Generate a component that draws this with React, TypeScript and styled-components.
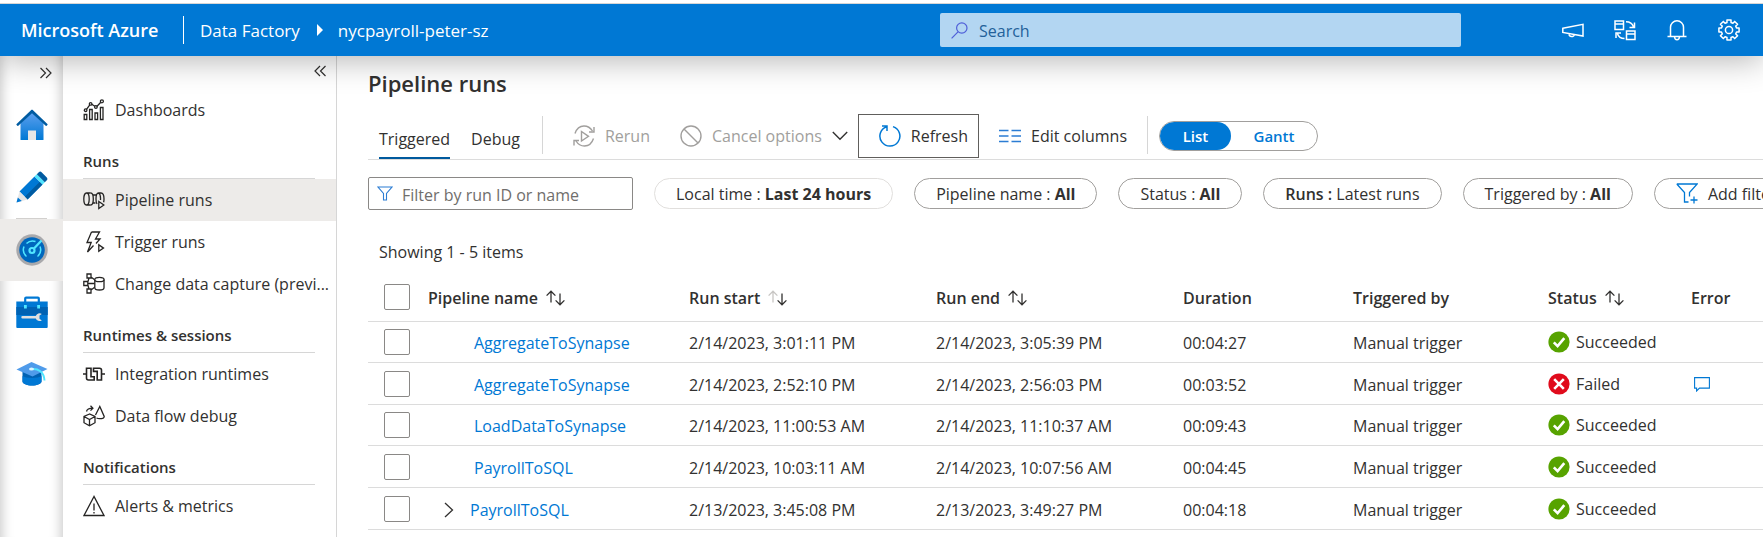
import React from 'react';
import styled, { createGlobalStyle } from 'styled-components';

const GlobalStyle = createGlobalStyle`
  *, *::before, *::after { box-sizing: border-box; }
  body { margin: 0; background: #fff; overflow-x: hidden; }
  body, button, input { font-family: 'Open Sans', 'Noto Sans', sans-serif; font-size: 16px; color: #323130; }
  button { background: none; border: 0; padding: 0; margin: 0; }
  a { text-decoration: none; }
  svg { display: block; flex: none; }
`;

const Page = styled.div`
  display: flex;
  flex-direction: column;
  min-height: 100vh;
`;

const TopStrip = styled.div`
  height: 4px;
  background: #fff;
  border-bottom: 1px solid #d6d6d6;
  position: relative;
  z-index: 3;
`;

const Header = styled.header`
  display: grid;
  grid-template-columns: minmax(0, 1fr) 521px 302px;
  align-items: center;
  height: 52px;
  background: #0078d4;
  color: #fff;
  position: relative;
  z-index: 2;
  box-shadow: 0 4px 32px rgba(0, 0, 0, 0.3);
`;

const Brand = styled.div`
  display: flex;
  align-items: center;
  padding-left: 21px;
  white-space: nowrap;
`;

const BrandName = styled.a`
  color: #fff;
  font-size: 18px;
  font-weight: 600;
  width: 162px;
`;

const BrandRule = styled.span`
  width: 1px;
  height: 28px;
  background: #fff;
  margin-right: 16px;
`;

const Crumb = styled.a`
  color: #fff;
  font-size: 17px;
`;

const CrumbArrow = styled.svg`
  margin: 0 15px 0 17px;
`;

const SearchBox = styled.label`
  display: flex;
  align-items: center;
  gap: 11px;
  height: 34px;
  padding: 0 11px;
  background: #b3d6f2;
  border-radius: 2px;
`;

const SearchInput = styled.input`
  flex: 1;
  min-width: 0;
  border: 0;
  padding: 1px 0 0;
  background: none;
  outline: none;
  &::placeholder { color: #23619a; opacity: 1; }
`;

const HeaderActions = styled.div`
  display: flex;
  justify-content: flex-end;
  gap: 30px;
  padding-right: 23px;
`;

const IconButton = styled.button`
  display: flex;
  color: inherit;
`;

const Body = styled.div`
  display: flex;
  flex: 1;
`;

const Rail = styled.nav`
  display: flex;
  flex-direction: column;
  align-items: center;
  flex: none;
  width: 63px;
  background: #fff;
  box-shadow: inset 14px 0 12px -12px rgba(0, 0, 0, 0.22), inset -14px 0 12px -12px rgba(0, 0, 0, 0.22);
`;

const RailToggle = styled.button`
  display: flex;
  align-self: flex-end;
  align-items: center;
  height: 38px;
  margin-right: 11px;
  padding-bottom: 4px;
`;

const RailItem = styled.a<{ $active?: boolean }>`
  display: flex;
  align-items: center;
  justify-content: center;
  width: 100%;
  height: 62px;
  background: ${(p) => (p.$active ? '#edebe9' : 'none')};
`;

const RailRule = styled.span`
  width: 31px;
  height: 1px;
  background: #d2d0ce;
`;

const SideNav = styled.nav`
  flex: none;
  width: 274px;
  border-right: 1px solid #d6d6d6;
  background: #fff;
`;

const NavToggle = styled.button`
  display: flex;
  align-items: center;
  height: 33px;
  margin: 0 10px 0 auto;
  padding-bottom: 4px;
`;

const NavItem = styled.a<{ $active?: boolean }>`
  display: flex;
  align-items: center;
  gap: 10px;
  height: 42px;
  padding: 0 0 0 20px;
  background: ${(p) => (p.$active ? '#edebe9' : 'none')};
  color: #323130;
  white-space: nowrap;
`;

const NavHeading = styled.h2`
  margin: 0 21px 0 20px;
  height: 48px;
  padding-top: 20px;
  border-bottom: 1px solid #d6d6d6;
  font-size: 15px;
  line-height: 20px;
  font-weight: 600;
`;

const Main = styled.main`
  flex: 1;
  min-width: 0;
  padding-left: 31px;
  overflow: hidden;
`;

const Title = styled.h1`
  margin: 0;
  padding: 12px 0 0;
  height: 56px;
  font-size: 22px;
  line-height: 30px;
  font-weight: 600;
`;

const Toolbar = styled.div`
  display: flex;
  align-items: flex-start;
  height: 48px;
  border-bottom: 1px solid #dcdcdc;
  white-space: nowrap;
`;

const Tabs = styled.div`
  display: flex;
  gap: 21px;
  padding: 0 22px 0 11px;
`;

const Tab = styled.button<{ $selected?: boolean }>`
  height: 47px;
  padding-top: 8px;
  border-bottom: 2px solid ${(p) => (p.$selected ? '#005a9e' : 'transparent')};
`;

const ToolbarRule = styled.span`
  width: 1px;
  height: 38px;
  margin-top: 4px;
  background: #d6d6d6;
`;

const Command = styled.button<{ $disabled?: boolean; $framed?: boolean }>`
  display: flex;
  align-items: center;
  gap: 10px;
  height: 44px;
  margin-top: 2px;
  padding: ${(p) => (p.$framed ? '0 10px 0 20px' : '0')};
  border: ${(p) => (p.$framed ? '1px solid #605e5c' : '0')};
  color: ${(p) => (p.$disabled ? '#a19f9d' : '#323130')};
`;

const CommandGroup = styled.div<{ $end?: boolean }>`
  display: flex;
  flex: none;
  gap: ${(p) => (p.$end ? '20px' : '30px')};
  padding: ${(p) => (p.$end ? '0 20px 0 10px' : '0 0 0 30px')};
`;

const ViewSwitch = styled.div`
  display: flex;
  width: 159px;
  height: 30px;
  margin: 9px 0 0 11px;
  border: 1px solid #a19f9d;
  border-radius: 15px;
  overflow: hidden;
`;

const ViewOption = styled.button<{ $on?: boolean }>`
  flex: ${(p) => (p.$on ? '0 0 71px' : '1')};
  border-radius: 14px;
  background: ${(p) => (p.$on ? '#0078d4' : 'none')};
  color: ${(p) => (p.$on ? '#fff' : '#0078d4')};
  font-size: 15px;
  font-weight: 600;
`;

const Filters = styled.div`
  display: flex;
  align-items: center;
  gap: 21px;
  padding-top: 17px;
  white-space: nowrap;
`;

const FilterBox = styled.label`
  display: flex;
  flex: none;
  align-items: center;
  gap: 9px;
  width: 265px;
  height: 33px;
  padding: 0 8px;
  border: 1px solid #8a8886;
  border-radius: 2px;
`;

const FilterInput = styled.input`
  flex: 1;
  min-width: 0;
  padding: 2px 0 0;
  border: 0;
  outline: none;
  background: none;
  &::placeholder { color: #706e6c; opacity: 1; }
`;

const Pill = styled.button<{ $faint?: boolean }>`
  display: flex;
  flex: none;
  align-items: center;
  height: 31px;
  padding: 0 21px;
  border: 1px solid ${(p) => (p.$faint ? '#e1dfdd' : '#a19f9d')};
  border-radius: 16px;
`;

const PillText = styled.span<{ $weight?: number }>`
  font-weight: ${(p) => p.$weight ?? 400};
  white-space: pre;
`;

const AddFilterText = styled.span`
  padding-left: 10px;
`;

const Count = styled.p`
  margin: 0;
  padding: 29px 0 0 11px;
  line-height: 26px;
`;

const RunsTable = styled.table`
  width: 100%;
  table-layout: fixed;
  border-collapse: separate;
  border-spacing: 0;
  white-space: nowrap;
`;

const Col = styled.col<{ $w?: number }>`
  width: ${(p) => (p.$w ? `${p.$w}px` : 'auto')};
`;

const Row = styled.tr`
  height: 41px;
  &:nth-child(even), &:last-child { height: 42px; }
`;

const HeadRow = styled.tr`
  height: 57px;
`;

const Th = styled.th<{ $control?: boolean }>`
  padding: ${(p) => (p.$control ? '8px' : '9px')} 0 0;
  border-bottom: 1px solid #dcdcdc;
  text-align: left;
  font-weight: 600;
`;

const Td = styled.td<{ $control?: boolean }>`
  padding: ${(p) => (p.$control ? '0' : '2px')} 0 0;
  border-bottom: 1px solid #dcdcdc;
`;

const HeadLabel = styled.span`
  display: flex;
  align-items: center;
  gap: 8px;
`;

const Check = styled.input`
  display: block;
  appearance: none;
  width: 26px;
  height: 26px;
  margin: 0 0 0 16px;
  border: 1px solid #8a8886;
  border-radius: 2px;
  background: #fff;
`;

const NameCell = styled.div<{ $nested?: boolean }>`
  display: flex;
  align-items: center;
  gap: 16px;
  padding-left: ${(p) => (p.$nested ? '16px' : '46px')};
`;

const RunLink = styled.a`
  color: #0078d4;
`;

const StatusCell = styled.div`
  display: flex;
  align-items: center;
  gap: 6px;
`;

const ErrorButton = styled.button`
  display: flex;
  padding-left: 3px;
`;

type Stroke = { color?: string };

const Chevrons = ({ left }: { left?: boolean }) => (
  <svg width="12" height="12" viewBox="0 0 12 12" fill="none" stroke="#323130" strokeWidth="1.2">
    <path d={left ? 'M6 1 1 6l5 5M11.5 1 6.5 6l5 5' : 'M.5 1l5 5-5 5M6 1l5 5-5 5'} />
  </svg>
);

const Line = ({ children }: { children: React.ReactNode }) => (
  <svg width="22" height="22" viewBox="0 0 22 22" fill="none" stroke="#252423" strokeWidth="1.3">
    {children}
  </svg>
);

const DashboardIcon = () => (
  <Line>
    <path d="M1.2 15.5h2.600v5H1.200zM6.600 10.500h2.600v10H6.600zM12 14h2.600v6.500H12zM17.400 8.500H20v12h-2.600z" />
    <path d="M3.500 10.300 6.800 5.800M8.800 5.200l3 2M13.800 7.500l4-4.300" />
    <circle cx="2.600" cy="11.200" r="1.300" />
    <circle cx="7.600" cy="4.900" r="1.300" />
    <circle cx="12.900" cy="8" r="1.300" />
    <circle cx="18.900" cy="2.300" r="1.500" />
  </Line>
);

const PipelineIcon = () => (
  <Line>
    <path d="M3.500 4C2 4 .8 6.500.8 10s1.200 6 2.700 6 2.700-2.500 2.700-6S5 4 3.500 4h4.200M3.500 16h4.200" />
    <path d="M7.700 4c1.600 0 2.600 2.500 2.600 6s-1 6-2.600 6M10 6h3.500M10 14h2.500" />
    <path d="M15.500 4c-1.500 0-2.500 2.500-2.500 6 0 2.200.4 4 1 5M15.500 4H18c1.800 0 3 2.500 3 6 0 1.200-.1 2.300-.4 3.200M15.500 4c1.200.7 2 2.500 2 5v2" />
    <path d="M15.800 12.500v7l5-3.500z" fill="#fff" />
  </Line>
);

const TriggerIcon = () => (
  <Line>
    <path d="M8.500 1h8l-4 7h4.500L13 12.500M8.500 1 4 11.500h4.200L4.500 21l6-6.500" />
    <path d="M15.800 13.800v6.500l4.700-3.200z" />
  </Line>
);

const CaptureIcon = () => (
  <Line>
    <path d="M4 1h4v4H4zM.8 8.500h4v4h-4zM4 16h4v4H4zM5 8.500 6 5M5 12.500 6 16M4.800 10.500h7M8 4l4 3M8 17l4-3" />
    <path d="M11.800 6.500v8.300c0 1.300 2 2.200 4.600 2.200s4.600-.9 4.600-2.200V6.500" fill="#fff" />
    <ellipse cx="16.400" cy="6.500" rx="4.600" ry="2.200" fill="#fff" />
  </Line>
);

const IntegrationIcon = () => (
  <Line>
    <path strokeWidth="1.600" d="M0 11h3.300M18.700 11H22M3.500 5.200H8v8.600h3.200V17H5.500c-1.200 0-2-.8-2-2zM10.500 5.200h6c1.200 0 2 .8 2 2V17h-4.300V8.400h-3.700z" />
  </Line>
);

const FlowDebugIcon = () => (
  <Line>
    <path d="M6.500 9 1 11.500v6.200l5.500 3 5.500-3v-6.200zM1 11.500l5.500 3 5.500-3M6.500 14.500v6" />
    <path d="M13.500 13c.8.400 1.800.7 3 .7 2.500 0 4.700-1 4.700-2.200L16.800 1.500 12.500 10" />
    <path d="M3.500 6.500C4 4 6 3.200 9.800 3.200M7.500.8 9.900 3.200 7.500 5.600" />
  </Line>
);

const AlertIcon = () => (
  <Line>
    <path d="M11 1.500 1 20.500h20zM11 8.500v7M11 17v1.500" />
  </Line>
);

const FilterIcon = () => (
  <svg width="16" height="15" viewBox="0 0 16 15" fill="none" stroke="#2b7cd3" strokeWidth="1.100">
    <path d="M1 1h14L9.500 7.500V14h-3V7.500z" />
  </svg>
);

const SortIcon = ({ color = '#323130' }: Stroke) => (
  <svg width="19" height="16" viewBox="0 0 19 16" fill="none" strokeWidth="1.300">
    <path stroke={color} d="M5 12.500V1.200M.6 5.600 5 1.200l4.400 4.400" />
    <path stroke="#323130" d="M14 3.500v11.300M9.600 10.400l4.400 4.400 4.400-4.400" />
  </svg>
);

const HomeIcon = () => (
  <svg width="32" height="32" viewBox="0 0 32 32">
    <defs>
      <linearGradient id="sky" x1="0" y1="0" x2="0" y2="1">
        <stop offset="0" stopColor="#5ea0ef" />
        <stop offset="1" stopColor="#0078d4" />
      </linearGradient>
    </defs>
    <path fill="url(#sky)" d="M4.500 14 16 3l11.500 11v16.500a.5.500 0 0 1-.5.500H5a.5.500 0 0 1-.5-.5z" />
    <path fill="#005ba1" d="M16 .8c.4 0 .7.100 1 .4L31.400 15c.4.400.3.700 0 1l-.8.700c-.3.300-.6.300-.9 0L16 4.200 2.300 16.700c-.3.300-.6.300-.9 0L.6 16c-.3-.3-.3-.6 0-1L15 1.200c.3-.3.600-.4 1-.4z" />
    <path fill="#e6e6e6" d="M12 21.500h8V31h-8z" />
  </svg>
);

const PencilIcon = () => (
  <svg width="32" height="32" viewBox="0 0 32 32">
    <path fill="#0078d4" d="M18.500 5.500 26.500 13.500 11.500 28.500 3.500 20.500z" />
    <path fill="#005ba1" d="m23.800 10.800 2.700 2.700-15 15-2.700-2.700z" />
    <path fill="#50e6ff" d="m18.500 5.500 2.300-2.300 8 8-2.300 2.300z" />
    <path fill="#005ba1" d="m20.800 3.200 2-2c.8-.8 2-.8 2.800 0l5.200 5.200c.8.800.8 2 0 2.800l-2 2z" />
    <path fill="#e6e6e6" d="m3.500 20.500 8 8L.5 31.500z" />
    <path fill="#0078d4" d="M1.800 26.500 5.800 30l-5.300 1.500z" />
  </svg>
);

const GaugeIcon = () => (
  <svg width="32" height="32" viewBox="0 0 32 32" fill="none">
    <circle cx="16" cy="16" r="15.700" fill="#a9a9ac" />
    <circle cx="16" cy="16" r="12.800" fill="#0067bd" />
    <g stroke="#50e6ff" strokeWidth="1.500">
      <path d="M10.500 22.500A9 9 0 0 1 8 12.500M10.500 9.500A9 9 0 0 1 19.500 7.500M24 12.500a9 9 0 0 1-2.500 10" />
      <path strokeWidth="2.200" d="m18 14.500 7.500-8" />
      <circle cx="16" cy="16.500" r="2.500" strokeWidth="2.200" />
    </g>
  </svg>
);

const ToolboxIcon = () => (
  <svg width="32" height="32" viewBox="0 0 32 32">
    <path fill="none" stroke="#0078d4" strokeWidth="2.200" d="M9.200 7V2.500c0-.6.300-.9.900-.9h11.800c.6 0 .9.300.9.900V7" />
    <path fill="#0078d4" d="M.3 5.500h31.400V31c0 .6-.3.900-.9.900H1.200c-.6 0-.9-.3-.9-.9z" />
    <path fill="#0062b3" d="M.3 11h31.400v8H.3z" />
    <path fill="#50e6ff" d="M8 9h2.800v3.500H8zM21.200 9H24v3.500h-2.800z" />
    <path fill="#e0e0e0" d="M6.500 20h13.300a4 4 0 0 1 6-2l-2.300 1.600v3.200l2.300 1.600a4 4 0 0 1-6-2H6.500a1.200 1.200 0 0 1 0-2.400z" />
  </svg>
);

const LearnIcon = () => (
  <svg width="32" height="32" viewBox="0 0 32 32">
    <path fill="#0062b3" d="M6.500 13h19v10.500c0 2-4.200 4-9.500 4s-9.500-2-9.500-4z" />
    <path fill="#0078d4" d="M6.500 18c3 2.500 16 2.500 19 0v5.500c0 2-4.200 4-9.500 4s-9.500-2-9.500-4z" />
    <path fill="#4f9bea" d="M15.500 4 31.500 11 16.500 18.500.5 11.500z" />
    <path fill="none" stroke="#50e6ff" strokeWidth="2" d="M16 11c6-.5 12 2.500 12.500 11.500" />
    <ellipse cx="15.500" cy="11" rx="2.500" ry="1.500" fill="#d9f5ff" />
  </svg>
);

const White = ({ children }: { children: React.ReactNode }) => (
  <svg width="22" height="22" viewBox="0 0 22 22" fill="none" stroke="#fff" strokeWidth="1.500">
    {children}
  </svg>
);

const gearPath = () => {
  const points: string[] = [];
  for (let i = 0; i < 8; i++) {
    const mid = (i * Math.PI) / 4;
    [[-0.26, 7.8], [-0.2, 10.3], [0.2, 10.3], [0.26, 7.8]].forEach(([da, r]) => {
      points.push(`${(11 + r * Math.sin(mid + da)).toFixed(2)} ${(11 - r * Math.cos(mid + da)).toFixed(2)}`);
    });
  }
  return `M${points.join('L')}Z`;
};

const StatusIcon = ({ ok }: { ok: boolean }) => (
  <svg width="22" height="22" viewBox="0 0 22 22" fill="none" stroke="#fff" strokeWidth="2.600">
    <circle cx="11" cy="11" r="10.600" fill={ok ? '#57a300' : '#e00b1c'} stroke="none" />
    <path d={ok ? 'm5.800 11.400 3.800 3.800 6.700-8' : 'm6.200 6.200 9.600 9.600m0-9.600-9.600 9.600'} />
  </svg>
);

const runs = [
  { name: 'AggregateToSynapse', start: '2/14/2023, 3:01:11 PM', end: '2/14/2023, 3:05:39 PM', duration: '00:04:27', ok: true },
  { name: 'AggregateToSynapse', start: '2/14/2023, 2:52:10 PM', end: '2/14/2023, 2:56:03 PM', duration: '00:03:52', ok: false },
  { name: 'LoadDataToSynapse', start: '2/14/2023, 11:00:53 AM', end: '2/14/2023, 11:10:37 AM', duration: '00:09:43', ok: true },
  { name: 'PayrollToSQL', start: '2/14/2023, 10:03:11 AM', end: '2/14/2023, 10:07:56 AM', duration: '00:04:45', ok: true },
  { name: 'PayrollToSQL', start: '2/13/2023, 3:45:08 PM', end: '2/13/2023, 3:49:27 PM', duration: '00:04:18', ok: true, nested: true },
];

const NavLink = ({ icon, text, active }: { icon: React.ReactNode; text: string; active?: boolean }) => (
  <NavItem href="#" $active={active}>
    {icon}
    <span>{text}</span>
  </NavItem>
);

const FilterPill = ({ label, value, faint, strongLabel }: { label: string; value: string; faint?: boolean; strongLabel?: boolean }) => (
  <Pill $faint={faint}>
    <PillText $weight={strongLabel ? 600 : 400}>{label} : </PillText>
    <PillText $weight={strongLabel ? 400 : 700}>{value}</PillText>
  </Pill>
);

export default function App() {
  return (
    <Page>
      <GlobalStyle />
      <TopStrip />
      <Header>
        <Brand>
          <BrandName href="#">Microsoft Azure</BrandName>
          <BrandRule />
          <Crumb href="#">Data Factory</Crumb>
          <CrumbArrow width="6" height="12" viewBox="0 0 6 12"><path fill="#fff" d="M0 0l6 6-6 6z" /></CrumbArrow>
          <Crumb href="#">nycpayroll-peter-sz</Crumb>
        </Brand>
        <SearchBox>
          <svg width="17" height="17" viewBox="0 0 17 17" fill="none" stroke="#4f5fd8" strokeWidth="1.200">
            <circle cx="10.800" cy="6" r="5.200" /><path d="M7 9.800.6 16.300" />
          </svg>
          <SearchInput placeholder="Search" aria-label="Search" />
        </SearchBox>
        <HeaderActions>
          <IconButton aria-label="Announcements">
            <White><path d="M.8 9.300 21 5.300v11.800L.8 13.400zM7 14.800c0 3.600 5 3.600 5.200.8" /></White>
          </IconButton>
          <IconButton aria-label="Switch directory">
            <White><path d="M1 2h8.500v8.500H1zM1 5h8.500M12.500 12H21v8.500h-8.500zM12.500 15H21M12 2.800c4 0 6.500 1.800 7.500 5.200M20.500 3.500v5h-5M10.500 19.500c-4 0-6-1.500-7-4.700M2 19v-5h5" /></White>
          </IconButton>
          <IconButton aria-label="Notifications">
            <White><path d="M4.500 17.500V8.300a6.500 6.500 0 0 1 13 0v9.200M1.500 17.500h19M8.500 17.800c.3 4 4.700 4 5 0" /></White>
          </IconButton>
          <IconButton aria-label="Settings">
            <White><path d={gearPath()} strokeLinejoin="round" /><circle cx="11" cy="11" r="3.600" /></White>
          </IconButton>
        </HeaderActions>
      </Header>
      <Body>
        <Rail>
          <RailToggle aria-label="Expand menu"><Chevrons /></RailToggle>
          <RailItem href="#" aria-label="Home"><HomeIcon /></RailItem>
          <RailItem href="#" aria-label="Author"><PencilIcon /></RailItem>
          <RailRule />
          <RailItem href="#" aria-label="Monitor" $active><GaugeIcon /></RailItem>
          <RailItem href="#" aria-label="Manage"><ToolboxIcon /></RailItem>
          <RailItem href="#" aria-label="Learning center"><LearnIcon /></RailItem>
        </Rail>
        <SideNav>
          <NavToggle aria-label="Collapse navigation"><Chevrons left /></NavToggle>
          <NavLink icon={<DashboardIcon />} text="Dashboards" />
          <NavHeading>Runs</NavHeading>
          <NavLink icon={<PipelineIcon />} text="Pipeline runs" active />
          <NavLink icon={<TriggerIcon />} text="Trigger runs" />
          <NavLink icon={<CaptureIcon />} text="Change data capture (previ..." />
          <NavHeading>Runtimes &amp; sessions</NavHeading>
          <NavLink icon={<IntegrationIcon />} text="Integration runtimes" />
          <NavLink icon={<FlowDebugIcon />} text="Data flow debug" />
          <NavHeading>Notifications</NavHeading>
          <NavLink icon={<AlertIcon />} text="Alerts & metrics" />
        </SideNav>
        <Main>
          <Title>Pipeline runs</Title>
          <Toolbar>
            <Tabs>
              <Tab $selected>Triggered</Tab>
              <Tab>Debug</Tab>
            </Tabs>
            <ToolbarRule />
            <CommandGroup>
              <Command $disabled>
                <svg width="22" height="22" viewBox="0 0 22 22" fill="none" stroke="#a19f9d" strokeWidth="1.400">
                  <path d="M2 8.500C3.500 4 7 1 11 1c3.500 0 6.500 1.800 8.500 5M21 2v5h-5M20.500 13.500C19 18 15.500 21 11.500 21 8 21 5 19.200 3 16M1 20.500v-5h5M8.500 6.500v9.500l7-4.700z" />
                </svg>
                Rerun
              </Command>
              <Command $disabled>
                <svg width="22" height="22" viewBox="0 0 22 22" fill="none" stroke="#a19f9d" strokeWidth="1.400">
                  <circle cx="11" cy="11" r="10" /><path d="m4 4 14 14" />
                </svg>
                Cancel options
                <svg width="16" height="10" viewBox="0 0 16 10" fill="none" stroke="#323130" strokeWidth="1.400"><path d="m.8 1 7.200 7.200L15.200 1" /></svg>
              </Command>
            </CommandGroup>
            <CommandGroup $end>
              <Command $framed>
                <svg width="22" height="22" viewBox="0 0 22 22" fill="none" stroke="#0078d4" strokeWidth="1.500">
                  <path d="M14 1.600A10 10 0 1 1 7.500 1.700M3 1h5v5" />
                </svg>
                Refresh
              </Command>
              <Command>
                <svg width="22" height="14" viewBox="0 0 22 14" stroke="#2b7cd3" strokeWidth="1.400">
                  <path d="M0 1.500h9.500M12.500 1.500H22M0 7h9.500M12.500 7H22M0 12.500h9.500M12.500 12.500H22" />
                </svg>
                Edit columns
              </Command>
            </CommandGroup>
            <ToolbarRule />
            <ViewSwitch role="group" aria-label="View">
              <ViewOption $on aria-pressed="true">List</ViewOption>
              <ViewOption aria-pressed="false">Gantt</ViewOption>
            </ViewSwitch>
          </Toolbar>
          <Filters>
            <FilterBox>
              <FilterIcon />
              <FilterInput placeholder="Filter by run ID or name" aria-label="Filter by run ID or name" />
            </FilterBox>
            <FilterPill label="Local time" value="Last 24 hours" faint />
            <FilterPill label="Pipeline name" value="All" />
            <FilterPill label="Status" value="All" />
            <FilterPill label="Runs" value="Latest runs" strongLabel />
            <FilterPill label="Triggered by" value="All" />
            <Pill>
              <svg width="22" height="21" viewBox="0 0 22 21" fill="none" stroke="#0078d4" strokeWidth="1.300">
                <path d="M.8 1h20.400l-7.700 8.500v4M.8 1l7.700 8.500V19h4M18 13.500v7M14.500 17H21.500" />
              </svg>
              <AddFilterText>Add filter</AddFilterText>
            </Pill>
          </Filters>
          <Count>Showing 1 - 5 items</Count>
          <RunsTable>
            <colgroup>
              {[60, 261, 247, 247, 170, 195, 143].map((w, i) => <Col key={i} $w={w} />)}
              <Col />
            </colgroup>
            <thead>
              <HeadRow>
                <Th $control><Check type="checkbox" aria-label="Select all runs" /></Th>
                <Th><HeadLabel>Pipeline name <SortIcon /></HeadLabel></Th>
                <Th><HeadLabel>Run start <SortIcon color="#c8c6c4" /></HeadLabel></Th>
                <Th><HeadLabel>Run end <SortIcon /></HeadLabel></Th>
                <Th>Duration</Th>
                <Th>Triggered by</Th>
                <Th><HeadLabel>Status <SortIcon /></HeadLabel></Th>
                <Th>Error</Th>
              </HeadRow>
            </thead>
            <tbody>
              {runs.map((run) => (
                <Row key={run.start}>
                  <Td $control><Check type="checkbox" aria-label={`Select ${run.name}`} /></Td>
                  <Td>
                    <NameCell $nested={run.nested}>
                      {run.nested && (
                        <svg width="10" height="16" viewBox="0 0 10 16" fill="none" stroke="#323130" strokeWidth="1.300"><path d="m1 1 7.500 7L1 15" /></svg>
                      )}
                      <RunLink href="#">{run.name}</RunLink>
                    </NameCell>
                  </Td>
                  <Td>{run.start}</Td>
                  <Td>{run.end}</Td>
                  <Td>{run.duration}</Td>
                  <Td>Manual trigger</Td>
                  <Td $control><StatusCell><StatusIcon ok={run.ok} />{run.ok ? 'Succeeded' : 'Failed'}</StatusCell></Td>
                  <Td>
                    {!run.ok && (
                      <ErrorButton aria-label="Show error">
                        <svg width="16" height="15" viewBox="0 0 16 15" fill="none" stroke="#0078d4" strokeWidth="1.100">
                          <path d="M.6.600h14.800v10.500H5.500L2.600 14v-2.900h-2z" />
                        </svg>
                      </ErrorButton>
                    )}
                  </Td>
                </Row>
              ))}
            </tbody>
          </RunsTable>
        </Main>
      </Body>
    </Page>
  );
}
